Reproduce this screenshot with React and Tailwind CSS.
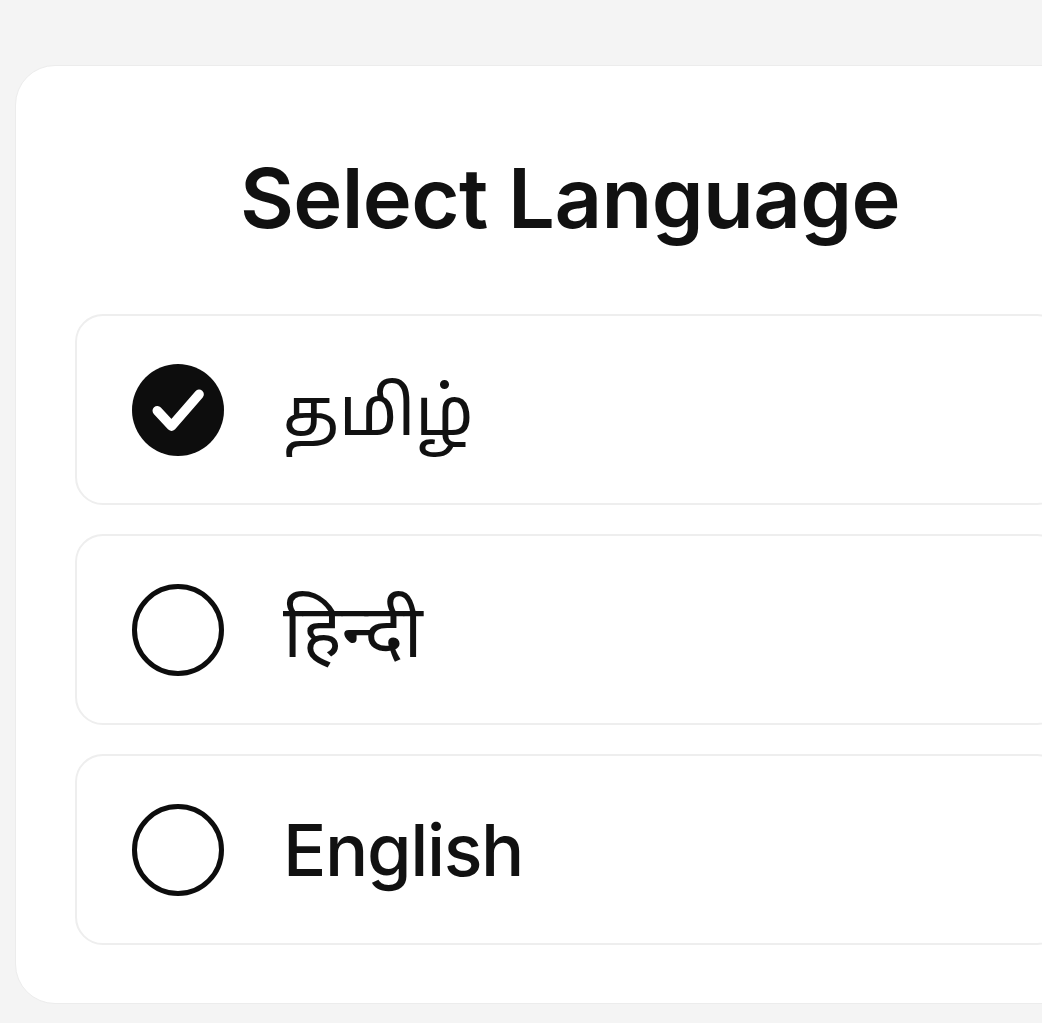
const languages = [
  { code: "ta", label: "தமிழ்", cls: "text-[68px] font-normal" },
  { code: "hi", label: "हिन्दी", cls: "text-[74px] font-normal" },
  { code: "en", label: "English", cls: "text-[72px] font-medium tracking-[-1.4px]" },
];

function RadioMark({ checked }) {
  if (checked) {
    return (
      <div className="flex h-[92px] w-[92px] shrink-0 items-center justify-center rounded-full bg-[#0d0d0d]">
        <svg viewBox="0 0 24 24" className="h-[92px] w-[92px]" fill="none">
          <path
            d="M6.6 12.2l3.7 4 7.2-8.3"
            stroke="#ffffff"
            strokeWidth="2.5"
            strokeLinecap="round"
            strokeLinejoin="round"
          />
        </svg>
      </div>
    );
  }
  return (
    <div className="h-[92px] w-[92px] shrink-0 rounded-full border-[5px] border-[#0d0d0d]" />
  );
}

export default function App() {
  const selected = "ta";

  return (
    <div
      className="h-[1023px] w-[1042px] overflow-hidden bg-[#f4f4f4] pl-[15px] pt-[65px]"
      style={{ fontFamily: 'Inter, "Noto Sans", "Noto Sans Tamil", "Noto Sans Devanagari", sans-serif' }}
    >
      {/* Card */}
      <div className="w-[1110px] rounded-[40px] border border-[#ececec] bg-white px-[59px] pb-[58px] pt-[91px]">
        <h1 className="text-center text-[83px] font-semibold leading-none tracking-[-0.6px] text-[#111]">
          Select Language
        </h1>

        <div className="mt-[74px] flex flex-col gap-[29px]">
          {languages.map((lang) => (
            <div
              key={lang.code}
              className="flex h-[191px] items-center gap-[59px] rounded-[28px] border-2 border-[#eeeeee] bg-white pl-[55px]"
            >
              <RadioMark checked={lang.code === selected} />
              <span className={`${lang.cls} leading-none text-[#111]`}>
                {lang.label}
              </span>
            </div>
          ))}
        </div>
      </div>
    </div>
  );
}
